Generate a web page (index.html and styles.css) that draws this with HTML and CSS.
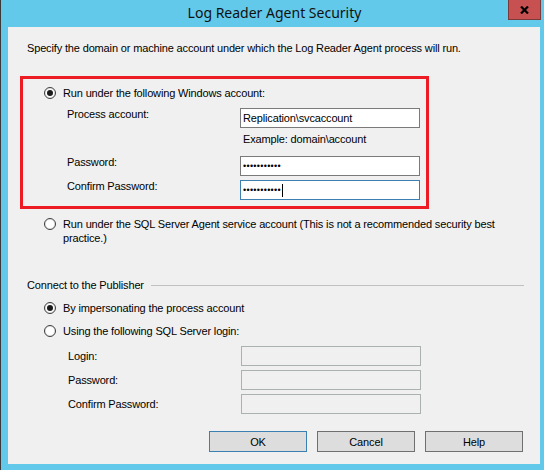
FILE: index.html
```html
<!DOCTYPE html>
<html>
<head>
<meta charset="utf-8">
<title>Log Reader Agent Security</title>
<link rel="stylesheet" href="styles.css">
</head>
<body>
<div class="window">
  <div class="titlebar">
    <span class="title">Log Reader Agent Security</span>
    <div class="close" aria-label="Close">
      <svg width="9" height="8" viewBox="0 0 9 8"><path d="M1 0.5 L8 7.5 M8 0.5 L1 7.5" stroke="#000" stroke-width="2.2" fill="none"/></svg>
    </div>
  </div>
  <div class="client">
    <div class="intro">Specify the domain or machine account under which the Log Reader Agent process will run.</div>

    <div class="highlight">
      <div class="radio-row">
        <span class="radio checked"></span>
        <span>Run under the following Windows account:</span>
      </div>
      <div class="field-row top-label first">
        <span class="field-label">Process account:</span>
        <div class="textbox">Replication\svcaccount</div>
      </div>
      <div class="hint">Example: domain\account</div>
      <div class="field-row top-label gap-lg">
        <span class="field-label">Password:</span>
        <div class="textbox"><span class="dots">•••••••••••</span></div>
      </div>
      <div class="field-row top-label">
        <span class="field-label">Confirm Password:</span>
        <div class="textbox focused"><span class="dots">•••••••••••</span><span class="caret"></span></div>
      </div>
    </div>

    <div class="radio-row multi outer">
      <span class="radio"></span>
      <span class="wrap-text">Run under the SQL Server Agent service account (This is not a recommended security best practice.)</span>
    </div>

    <div class="group-heading">
      <span>Connect to the Publisher</span>
      <span class="rule"></span>
    </div>

    <div class="radio-row outer option">
      <span class="radio checked"></span>
      <span>By impersonating the process account</span>
    </div>
    <div class="radio-row outer option">
      <span class="radio"></span>
      <span>Using the following SQL Server login:</span>
    </div>

    <div class="login-fields">
      <div class="field-row">
        <span class="field-label">Login:</span>
        <div class="textbox disabled"></div>
      </div>
      <div class="field-row">
        <span class="field-label">Password:</span>
        <div class="textbox disabled"></div>
      </div>
      <div class="field-row">
        <span class="field-label">Confirm Password:</span>
        <div class="textbox disabled"></div>
      </div>
    </div>

    <div class="buttons">
      <button class="btn default">OK</button>
      <button class="btn">Cancel</button>
      <button class="btn">Help</button>
    </div>
  </div>
</div>
</body>
</html>
```

FILE: styles.css
```css
* {
  box-sizing: border-box;
}

html, body {
  margin: 0;
  padding: 0;
  background: #62c9ea;
}

body {
  font-family: "Liberation Sans", Arial, sans-serif;
  font-size: 11px;
  letter-spacing: -0.15px;
  color: #000;
}

.window {
  width: 544px;
  height: 470px;
  background: #62c9ea;
  border-left: 1px solid #3a3a3a;
  position: relative;
  overflow: hidden;
}

.titlebar {
  height: 27px;
  display: flex;
  align-items: center;
  justify-content: center;
  padding-left: 4px;
  padding-bottom: 1px;
}

.title {
  font-family: "Noto Sans", "Open Sans", sans-serif;
  font-size: 14px;
  letter-spacing: 0;
  color: #111;
  line-height: 20px;
}

.close {
  position: absolute;
  top: 0;
  right: 3px;
  width: 33px;
  height: 20px;
  background: #c75050;
  border: 1px solid #7a3a3a;
  border-top: none;
  display: flex;
  align-items: center;
  justify-content: center;
}

.client {
  margin-left: 7px;
  width: 532px;
  height: 437px;
  background: #f0f0f0;
  padding-top: 14px;
}

.intro {
  margin-left: 19px;
  height: 14px;
  line-height: 14px;
}

.highlight {
  margin: 21px 0 0 12px;
  width: 409px;
  height: 133px;
  border: 3px solid #ed1c24;
  padding: 7px 0 0 21px;
}

.radio-row {
  display: flex;
  align-items: center;
  gap: 7px;
  height: 14px;
  line-height: 14px;
}

.radio {
  flex: none;
  width: 12px;
  height: 12px;
  border-radius: 50%;
  border: 1px solid #3c3c3c;
  background: #fff;
  box-shadow: inset 0 0 0 1px #e6e6e6;
  display: flex;
  align-items: center;
  justify-content: center;
}

.radio.checked::after {
  content: "";
  width: 6px;
  height: 6px;
  border-radius: 50%;
  background: #1a1a1a;
}

.field-row {
  display: flex;
  align-items: center;
  height: 20px;
  margin-left: 23px;
  margin-top: 4px;
}

.field-row.top-label .field-label {
  align-self: flex-start;
  line-height: 13px;
}

.field-row.first {
  margin-top: 8px;
}

.field-row.gap-lg {
  margin-top: 10px;
}

.field-label {
  width: 173px;
  flex: none;
  line-height: 14px;
}

.textbox {
  width: 180px;
  height: 20px;
  border: 1px solid #7a7a7a;
  background: #fff;
  padding-left: 2px;
  display: flex;
  align-items: center;
  line-height: 14px;
}

.textbox.focused {
  border-color: #3c7fb1;
}

.textbox.disabled {
  background: transparent;
  border-color: #abb0b0;
}

.dots {
  font-size: 9px;
  letter-spacing: 0.3px;
  line-height: 10px;
}

.caret {
  display: inline-block;
  width: 1px;
  height: 13px;
  background: #000;
  margin-left: 1px;
}

.hint {
  margin: 4px 0 0 199px;
  height: 14px;
  line-height: 14px;
}

.outer {
  margin-left: 36px;
}

.radio-row.multi {
  margin-top: 8px;
  height: 28px;
  align-items: flex-start;
}

.radio-row.multi .radio {
  margin-top: 1px;
}

.wrap-text {
  width: 440px;
  line-height: 14px;
}

.group-heading {
  margin: 33px 16px 0 19px;
  height: 14px;
  line-height: 14px;
  display: flex;
  align-items: center;
  gap: 7px;
}

.rule {
  flex: 1;
  height: 1px;
  background: #c0c0c0;
}

.option {
  margin-top: 9px;
}

.login-fields {
  margin-top: 8px;
}

.login-fields .field-row {
  margin-left: 60px;
}

.login-fields .field-row:first-child {
  margin-top: 0;
}

.buttons {
  margin-top: 17px;
  padding-left: 201px;
  display: flex;
  gap: 10px;
}

.btn {
  width: 98px;
  height: 21px;
  border: 1px solid #707070;
  background: #dddddd;
  font-family: "Liberation Sans", Arial, sans-serif;
  font-size: 11px;
  letter-spacing: -0.15px;
  color: #000;
  padding: 0;
  border-radius: 0;
}

.btn.default {
  border-color: #3c7fb1;
}
```
